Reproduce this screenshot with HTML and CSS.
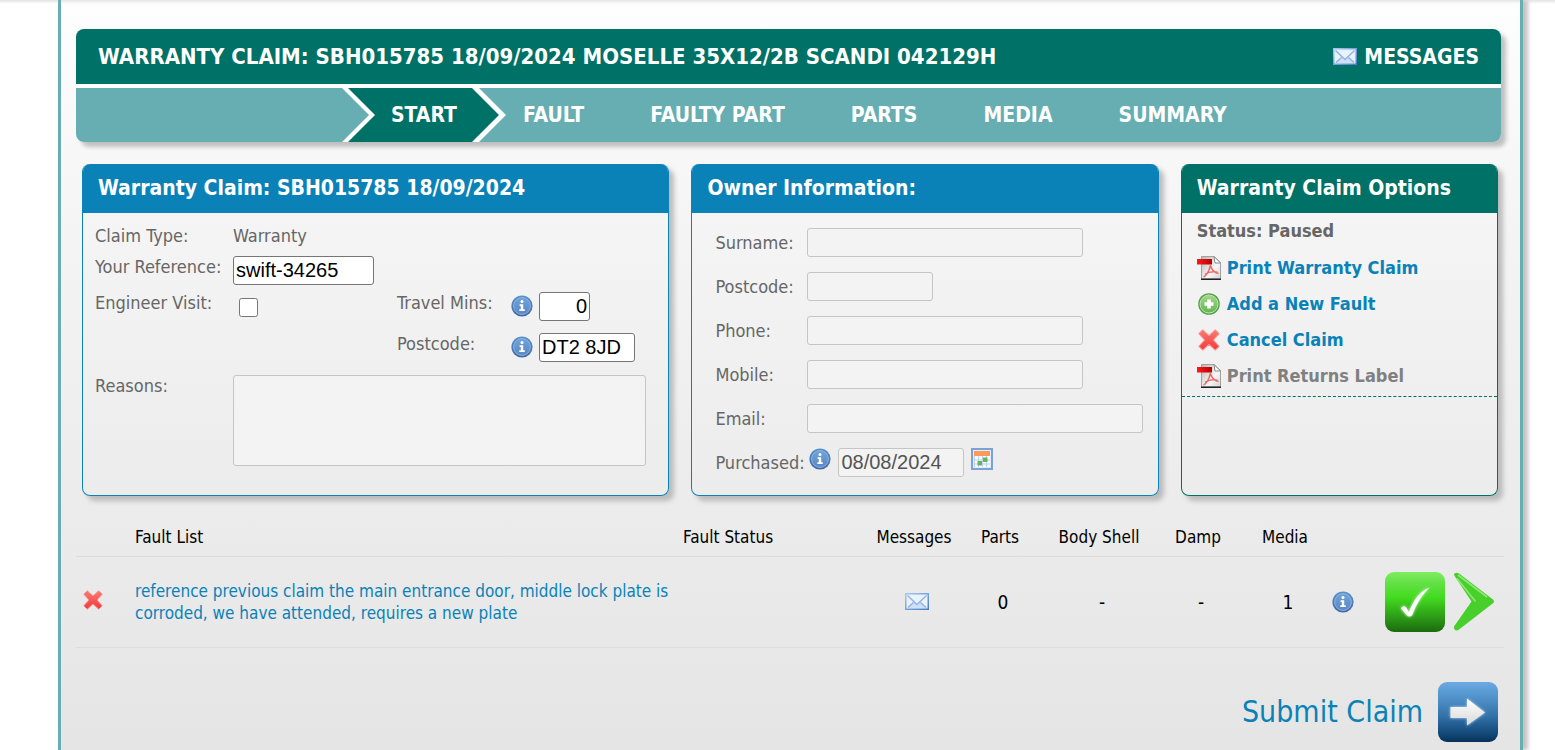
FILE: index.html
```html
<!DOCTYPE html>
<html lang="en">
<head>
    <meta charset="UTF-8">
    <meta name="viewport" content="width=device-width, initial-scale=1.0">
    <title>Warranty Claim</title>
    <link rel="stylesheet" href="styles.css">
</head>
<body>
    <!-- icon set -->
    <svg class="sprite" aria-hidden="true">
        <defs>
            <linearGradient id="gInfo" x1="0" y1="0" x2="0" y2="1">
                <stop offset="0" stop-color="#5b92cb"/><stop offset="1" stop-color="#3f67a8"/>
            </linearGradient>
            <linearGradient id="gInfoIn" x1="0" y1="0" x2="0" y2="1">
                <stop offset="0" stop-color="#6fa4d8"/><stop offset="1" stop-color="#5c86c4"/>
            </linearGradient>
            <linearGradient id="gAdd" x1="0" y1="0" x2="0" y2="1">
                <stop offset="0" stop-color="#a5d68a"/><stop offset="1" stop-color="#62b552"/>
            </linearGradient>
            <linearGradient id="gRed" x1="0" y1="0" x2="0" y2="1">
                <stop offset="0" stop-color="#f97a72"/><stop offset="1" stop-color="#f2383a"/>
            </linearGradient>
            <linearGradient id="gPage" x1="0" y1="0" x2="1" y2="1">
                <stop offset="0" stop-color="#b4b4b4"/><stop offset=".6" stop-color="#f7f7f7"/><stop offset="1" stop-color="#d4d4d4"/>
            </linearGradient>
            <linearGradient id="gBand" x1="0" y1="0" x2="1" y2="0">
                <stop offset="0" stop-color="#ff1a1a"/><stop offset="1" stop-color="#b50000"/>
            </linearGradient>
            <linearGradient id="gMail" x1="0" y1="0" x2="1" y2="1">
                <stop offset="0" stop-color="#a9c9ee"/><stop offset="1" stop-color="#4a7ac4"/>
            </linearGradient>
            <linearGradient id="gTick" x1="0" y1="0" x2="0" y2="1">
                <stop offset="0" stop-color="#7fec62"/><stop offset=".2" stop-color="#62e043"/><stop offset=".42" stop-color="#43dc1f"/><stop offset=".75" stop-color="#2c9c17"/><stop offset="1" stop-color="#1c6a10"/>
            </linearGradient>
            <linearGradient id="gSubmit" x1="0" y1="0" x2="0" y2="1">
                <stop offset="0" stop-color="#6aa9e2"/><stop offset=".12" stop-color="#5f9fd8"/><stop offset=".55" stop-color="#3574ab"/><stop offset=".9" stop-color="#0e4372"/><stop offset="1" stop-color="#082f55"/>
            </linearGradient>
            <linearGradient id="gArrow" x1="0" y1="0" x2="0" y2="1">
                <stop offset="0" stop-color="#ffffff"/><stop offset="1" stop-color="#d9d9d9"/>
            </linearGradient>
            <filter id="glow" x="-30%" y="-30%" width="160%" height="160%">
                <feGaussianBlur stdDeviation="1.6"/>
            </filter>
        </defs>
        <symbol id="info" viewBox="0 0 22 22">
            <circle cx="11" cy="11" r="10.6" fill="url(#gInfo)"/>
            <circle cx="11" cy="11" r="8.4" fill="url(#gInfoIn)" stroke="#8db5df" stroke-width="1"/>
            <circle cx="11" cy="6.600" r="1.500" fill="#fff"/>
            <path d="M8.600 9.300h3.600v5h1.600v1.600H8.300v-1.600h1.500v-3.400H8.600z" fill="#fff"/>
        </symbol>
        <symbol id="add" viewBox="0 0 24 24">
            <circle cx="12" cy="12" r="10.800" fill="#54a24a"/>
            <circle cx="12" cy="12" r="9" fill="url(#gAdd)" stroke="#c2e5b2" stroke-width="1"/>
            <path d="M10.200 7.500h3.600v2.700h2.700v3.600h-2.700v2.700h-3.600v-2.700H7.500v-3.600h2.700z" fill="#fff"/>
        </symbol>
        <symbol id="cross" viewBox="0 0 22 22">
            <path d="M5.200 1.800 11 7l5.800-5.200 3.400 3.400L15 11l5.200 5.800-3.400 3.400L11 15l-5.800 5.200-3.400-3.400L7 11 1.800 5.200z" fill="url(#gRed)" stroke="#fa8f8a" stroke-width="1" stroke-linejoin="round"/>
        </symbol>
        <symbol id="pdf" viewBox="0 0 24 24">
            <path d="M4.500.500H17l6.500 6v16.500h-19z" fill="url(#gPage)" stroke="#a0a0a0"/>
            <path d="M17 .500 23.500 7H18z" fill="#fff" stroke="#8a8a8a"/>
            <path d="M4 23.300h20" stroke="#222" stroke-width="1.400"/>
            <path d="M0 3h15v5.500H0z" fill="url(#gBand)"/>
            <path d="M6.500 21c3-1 6-7 7-12M13.500 9.500c1 4 3.500 7 8 8M8 18.200c4-2.500 8.500-3 12.500-2" fill="none" stroke="#ee6a68" stroke-width="1.500"/>
        </symbol>
        <symbol id="mail" viewBox="0 0 24 17">
            <path d="M0 0h24v17H0z" fill="url(#gMail)"/>
            <path d="M1.500 1.500h21v14h-21z" fill="#e9f2fd"/>
            <path d="m2 15 7-6.500L12 11l3-2.500L22 15z" fill="#cfe0f7"/>
            <path d="m2.500 2.500 9.500 9 9.500-9M3 14.500l5.500-5M21 14.500l-5.500-5" fill="none" stroke="#8fb2e0" stroke-width="1.300"/>
        </symbol>
        <symbol id="calendar" viewBox="0 0 22 22">
            <path d="M1 1h20v20H1z" fill="#e3eefc" stroke="#7ba2d8" stroke-width="2"/>
            <path d="M3 3h16v16H3z" fill="#f7fafe"/>
            <path d="M3 3h16v5H3z" fill="#ff9a58"/>
            <path d="M3.500 8v11M7.500 8v11M11.500 8v11M15.500 8v11M3 12h16M3 16h16" stroke="#bcd2ee" fill="none"/>
            <path d="M12 9.500h4.500v4.500H12zM6.500 13h4.500v4.500H6.500z" fill="#6cb25a"/>
        </symbol>
        <symbol id="tick" viewBox="0 0 60 60">
            <rect width="60" height="60" rx="9" fill="url(#gTick)"/>
            <path d="M16 36.500c1.500-3 4-3 5.300-.700l2.500 4.400C28 30 34 19 44.500 15.500 36 24 31 33 27.500 42.500c-1 2.500-5 2.500-6 .500z" fill="#d8ffca" filter="url(#glow)"/>
            <path d="M16 36.500c1.500-3 4-3 5.300-.700l2.500 4.400C28 30 34 19 44.500 15.500 36 24 31 33 27.500 42.500c-1 2.500-5 2.500-6 .500z" fill="#fff"/>
        </symbol>
        <symbol id="chevron" viewBox="0 0 41 60">
            <path d="M1 3C1 .500 4 0 6 1.500l34 26c1.300 1.200 1.300 2.600 0 3.800L6 57.500C3 60 .500 57.500 1 54.500L18.500 29.500z" fill="#48cf2b"/>
            <path d="M5 3 34 25M4 6.500l18.500 23" fill="none" stroke="#8be874" stroke-width="1.600"/>
        </symbol>
        <symbol id="submit" viewBox="0 0 60 60">
            <rect width="60" height="60" rx="9" fill="url(#gSubmit)"/>
            <path d="M12.500 25H29v-8.500L47 30.500 29 43.500V36H12.500z" fill="#bcd8f0" filter="url(#glow)"/>
            <path d="M12.500 25H29v-8.500L47 30.500 29 43.500V36H12.500z" fill="url(#gArrow)"/>
        </symbol>
    </svg>

    <div class="page">
        <header class="banner">
            <div class="banner-title">
                <h1>WARRANTY CLAIM: SBH015785 18/09/2024 MOSELLE 35X12/2B SCANDI 042129H</h1>
                <a href="#" class="messages"><svg class="icon-mail"><use href="#mail"/></svg>MESSAGES</a>
            </div>
            <nav class="steps">
                <a href="#" class="step active">START</a>
                <a href="#" class="step">FAULT</a>
                <a href="#" class="step">FAULTY PART</a>
                <a href="#" class="step">PARTS</a>
                <a href="#" class="step">MEDIA</a>
                <a href="#" class="step">SUMMARY</a>
            </nav>
        </header>

        <main>
            <div class="panels">
                <section class="panel">
                    <h2>Warranty Claim: SBH015785 18/09/2024</h2>
                    <div class="claim">
                        <span>Claim Type:</span>
                        <span class="wide">Warranty</span>

                        <label for="reference">Your Reference:</label>
                        <div class="wide"><input type="text" id="reference" class="w-ref" value="swift-34265"></div>

                        <label for="visit">Engineer Visit:</label>
                        <div><input type="checkbox" id="visit"></div>
                        <label for="travel">Travel Mins:</label>
                        <svg class="icon"><use href="#info"/></svg>
                        <div><input type="text" id="travel" class="w-mins" value="0"></div>

                        <label for="postcode" class="second">Postcode:</label>
                        <svg class="icon"><use href="#info"/></svg>
                        <div><input type="text" id="postcode" class="w-post" value="DT2 8JD"></div>

                        <label for="reasons">Reasons:</label>
                        <textarea id="reasons" class="wide" disabled></textarea>
                    </div>
                </section>

                <section class="panel">
                    <h2>Owner Information:</h2>
                    <div class="owner">
                        <label for="surname">Surname:</label>
                        <div><input type="text" id="surname" class="w-medium" disabled></div>
                        <label for="ownerPostcode">Postcode:</label>
                        <div><input type="text" id="ownerPostcode" class="w-short" disabled></div>
                        <label for="phone">Phone:</label>
                        <div><input type="text" id="phone" class="w-medium" disabled></div>
                        <label for="mobile">Mobile:</label>
                        <div><input type="text" id="mobile" class="w-medium" disabled></div>
                        <label for="email">Email:</label>
                        <div><input type="text" id="email" class="w-long" disabled></div>
                        <label for="purchased">Purchased:</label>
                        <div class="purchased">
                            <svg class="icon"><use href="#info"/></svg>
                            <input type="text" id="purchased" class="w-short" value="08/08/2024" disabled>
                            <svg class="icon"><use href="#calendar"/></svg>
                        </div>
                    </div>
                </section>

                <section class="panel options">
                    <h2>Warranty Claim Options</h2>
                    <p class="status">Status: Paused</p>
                    <ul>
                        <li><a href="#"><svg class="icon-option"><use href="#pdf"/></svg>Print Warranty Claim</a></li>
                        <li><a href="#"><svg class="icon-option"><use href="#add"/></svg>Add a New Fault</a></li>
                        <li><a href="#"><svg class="icon-option"><use href="#cross"/></svg>Cancel Claim</a></li>
                        <li><a class="off"><svg class="icon-option"><use href="#pdf"/></svg>Print Returns Label</a></li>
                    </ul>
                </section>
            </div>

            <table class="faults">
                <colgroup>
                    <col class="c-delete"><col><col class="c-status"><col class="c-num"><col class="c-num">
                    <col class="c-body"><col class="c-num"><col class="c-media"><col class="c-info"><col class="c-actions">
                </colgroup>
                <thead>
                    <tr>
                        <th></th>
                        <th class="left">Fault List</th>
                        <th class="left">Fault Status</th>
                        <th>Messages</th>
                        <th>Parts</th>
                        <th>Body Shell</th>
                        <th>Damp</th>
                        <th>Media</th>
                        <th></th>
                        <th></th>
                    </tr>
                </thead>
                <tbody>
                    <tr>
                        <td class="delete"><button type="button" aria-label="Delete fault"><svg class="icon"><use href="#cross"/></svg></button></td>
                        <td class="left"><a href="#">reference previous claim the main entrance door, middle lock plate is corroded, we have attended, requires a new plate</a></td>
                        <td></td>
                        <td><svg class="icon-mail"><use href="#mail"/></svg></td>
                        <td>0</td>
                        <td>-</td>
                        <td>-</td>
                        <td>1</td>
                        <td class="left"><svg class="icon"><use href="#info"/></svg></td>
                        <td>
                            <div class="actions">
                                <button type="button" aria-label="Complete"><svg class="icon-big"><use href="#tick"/></svg></button>
                                <button type="button" aria-label="Open fault"><svg class="icon-next"><use href="#chevron"/></svg></button>
                            </div>
                        </td>
                    </tr>
                </tbody>
            </table>

            <div class="submit-row">
                <a href="#" class="submit">Submit Claim<svg class="icon-big"><use href="#submit"/></svg></a>
            </div>
        </main>
    </div>
</body>
</html>
```
FILE: styles.css
```css
*{
    box-sizing: border-box;
}

body{
    margin: 0;
    background: #fff linear-gradient(#e4e4e4, #fff) no-repeat 0 0 / 100% 4px;
    font-family: Tahoma, "DejaVu Sans Condensed", "DejaVu Sans", sans-serif;
    font-size: 18px;
    line-height: 22px;
    color: #666;
}

a{
    color: #0a82b8;
    text-decoration: none;
}

svg{
    display: block;
    flex: none;
}

button{
    border: 0;
    padding: 0;
    background: none;
    cursor: pointer;
}

.sprite{
    position: absolute;
    width: 0;
    height: 0;
}

.page{
    margin: 0 32px 0 58px;
    min-height: 100vh;
    padding: 29px 19px 8px 15px;
    border: solid #66aeb1;
    border-width: 0 3px;
    background: linear-gradient(rgba(0,0,0,.1), transparent) no-repeat 0 0 / 100% 4px, linear-gradient(#fefefe, #f5f5f5 28%, #ececec 66%, #e5e5e5);
    box-shadow: 5px 0 4px #c4c4c4;
}

/* banner */
.banner{
    border-radius: 8px;
    box-shadow: 5px 5px 4px #c0c0c0;
    overflow: hidden;
    background: #fff;
    font-size: 21px;
    font-weight: bold;
}

.banner-title{
    display: flex;
    justify-content: space-between;
    align-items: center;
    height: 55px;
    padding: 0 22px;
    margin-bottom: 4px;
    background: #007166;
    color: #fff;
}

h1{
    margin: 0;
    font-size: 22px;
}

.messages{
    display: flex;
    align-items: center;
    gap: 7px;
    color: #fff;
}

.steps{
    display: flex;
    height: 54px;
    padding-left: 282px;
    background: #66aeb1;
    isolation: isolate;
}

.step{
    padding: 0 33px;
    line-height: 54px;
    color: #fff;
}

.active{
    position: relative;
}

.active::before,
.active::after{
    content: "";
    position: absolute;
    z-index: -1;
    top: 0;
    bottom: 0;
    clip-path: polygon(0 0, calc(100% - 27px) 0, 100% 50%, calc(100% - 27px) 100%, 0 100%, 27px 50%);
}

.active::before{
    left: -16px;
    right: -16px;
    background: #fff;
}

.active::after{
    left: -10px;
    right: -9px;
    background: #007166;
}

/* panels */
.panels{
    display: grid;
    grid-template-columns: 587fr 467fr 317fr;
    gap: 22px;
    margin: 22px 3px 0 6px;
}

.panel{
    border: 1px solid #0a82b8;
    border-top: 0;
    border-radius: 8px;
    overflow: hidden;
    box-shadow: 5px 5px 5px #bbb;
}

.panel h2{
    margin: 0;
    padding: 0 15px;
    line-height: 49px;
    font-size: 21px;
    color: #fff;
    background: #0a82b8;
}

.claim{
    display: grid;
    grid-template-columns: 138px 164px 114px 28px 1fr;
    grid-template-rows: 31px 36px 41px 42px auto;
    align-items: start;
    padding: 12px 22px 29px 12px;
}

.wide{
    grid-column: 2 / -1;
}

.second{
    grid-column: 3;
}

.owner{
    display: grid;
    grid-template-columns: 92px 1fr;
    row-gap: 15px;
    align-items: center;
    padding: 15px 14px 18px 23px;
}

.purchased{
    display: flex;
    gap: 7px;
    padding-left: 2px;
}

input,
textarea{
    display: block;
    height: 29px;
    margin: 0;
    padding: 1px 2px;
    border: 1px solid #767676;
    border-radius: 3px;
    background: #fff;
    font-family: "Liberation Sans", Arial, sans-serif;
    font-size: 20px;
    color: #000;
}

input:disabled,
textarea:disabled{
    border-color: #c5c5c5;
    background: #f3f3f3;
    color: #545454;
}

textarea{
    width: 100%;
    height: 91px;
    resize: none;
}

input[type=checkbox]{
    width: 19px;
    height: 19px;
    margin: 6px;
}

.w-ref{ width: 141px; }
.w-mins{ width: 51px; text-align: right; }
.w-post{ width: 96px; }
.w-short{ width: 126px; }
.w-medium{ width: 276px; }
.w-long{ width: 336px; max-width: 100%; }

.options{
    border-color: #007166;
}

.options h2{
    background: #007166;
}

.status{
    margin: 7px 15px 8px;
    font-weight: bold;
}

.options ul{
    margin: 0;
    padding: 0 15px 2px;
    list-style: none;
    border-bottom: 1px dashed #007166;
}

.options li a{
    display: flex;
    align-items: center;
    gap: 6px;
    height: 36px;
    font-weight: bold;
}

.options li a.off{
    color: #808080;
}

/* icons */
.icon{ width: 22px; height: 22px; }
.icon-option{ width: 24px; height: 24px; }
.icon-mail{ width: 24px; height: 17px; }
.icon-big{ width: 60px; height: 60px; }
.icon-next{ width: 41px; height: 60px; }

.claim .icon{
    margin-top: 3px;
}

/* fault list */
.faults{
    width: calc(100% + 3px);
    margin-top: 22px;
    border-collapse: collapse;
    table-layout: fixed;
    font-size: 17px;
    color: #000;
}

.c-delete{ width: 59px; }
.c-status{ width: 191px; }
.c-num{ width: 86px; }
.c-body{ width: 112px; }
.c-media{ width: 88px; }
.c-info{ width: 39px; }
.c-actions{ width: 133px; }

.faults th{
    height: 38px;
    padding: 0 6px 0 0;
    font-weight: normal;
    white-space: nowrap;
}

.faults td{
    height: 91px;
    padding: 0;
    text-align: center;
    font-size: 19px;
}

.faults tr{
    border-bottom: 1px solid #dcdcdc;
}

.faults .left{
    text-align: left;
    font-size: 17px;
}

.faults .delete{
    padding-left: 6px;
    text-align: left;
}

.faults td .icon-mail{
    margin: auto;
}

.actions{
    display: flex;
    justify-content: flex-end;
    gap: 8px;
    padding-right: 10px;
}

/* submit */
.submit-row{
    display: flex;
    justify-content: flex-end;
    padding: 34px 3px 0 0;
}

.submit{
    display: flex;
    align-items: center;
    gap: 15px;
    font-size: 30px;
}
```
